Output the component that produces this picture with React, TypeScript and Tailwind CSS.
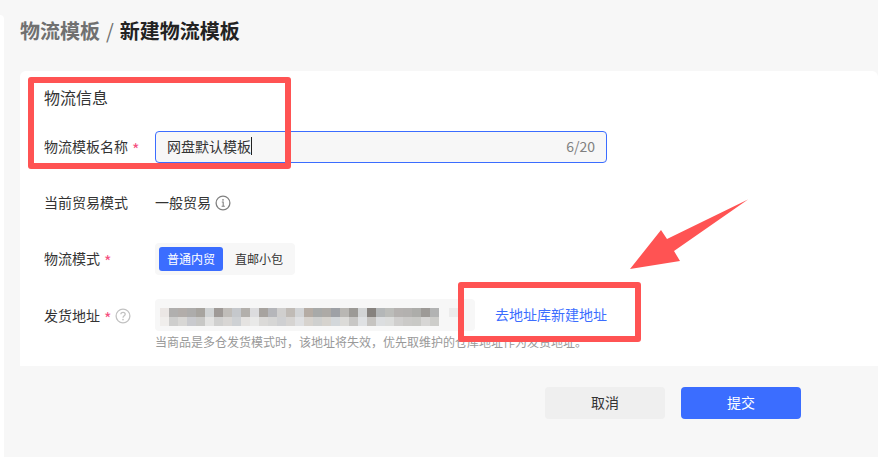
const top = ["#ebe7e5","#b0afae","#b2adaa","#adacab","#a7a49f","#d0d3d4","#9f9a97","#c0bdb9","#c5c8cc","#b3b0ac","#dcdcde","#a7a39f","#b5b6ba","#d0cfce","#c0bbb6","#d2d4d6","#b5aca4","#a8aaa9","#adaaa6","#9ea1a6","#b9b7b3","#9c9a96","#d2d4d5","#86827e","#b4b7b8","#bcbdba","#b5b2b0","#b3b1af","#adadaa","#9d9a97","#b2b3b3"];
const bottom = ["#f0eeec","#cececd","#d8d7d5","#c9cace","#c8c8c6","#e3e3e2","#d0d0cf","#d8d6d4","#ced1d4","#e5e3e1","#e9e9e8","#dbdad8","#d6d6d5","#cfd0d2","#d6d4d2","#dfe0e2","#d7d3ce","#cfd0cf","#d6d3ce","#d3d7da","#dcdbd8","#c8c7c5","#dfe1e3","#c6c4c1","#dcdee0","#dcdddc","#d0cfce","#cbcac8","#c9c9c6","#d7d6d5","#cdcdca"];

function Star() {
  return <span className="ml-1 translate-y-[3px] text-[16px] leading-none text-[#f5507f]">*</span>;
}

function Label({ children }: { children: React.ReactNode }) {
  return <div className="flex w-[111px] shrink-0 items-center pb-[2px] text-[#333333]">{children}</div>;
}

function Mosaic() {
  return (
    <svg width="298" height="18" viewBox="0 0 298 18" shapeRendering="crispEdges" className="block">
      {top.map((c, i) => <rect key={"t" + i} x={i * 9} y="0" width="9" height="9" fill={c} />)}
      {bottom.map((c, i) => <rect key={"b" + i} x={i * 9} y="9" width="9" height="9" fill={c} />)}
      <rect x="289" y="0" width="9" height="9" fill="#ececec" />
    </svg>
  );
}

export default function App() {
  return (
    <div className="relative flex h-[457px] w-[878px] overflow-hidden bg-[#f7f7f7] text-[14px] font-['Noto_Sans_CJK_SC','Liberation_Sans',sans-serif]">
      <div className="mt-[15px] w-1 shrink-0 rounded-tr-md bg-white" />
      <main className="min-w-0 flex-1">
        <h1 className="ml-4 mt-[17px] flex h-7 items-center text-[20px] font-semibold leading-7">
          <span className="text-[#707070]">物流模板</span>
          <span className="mx-[6px] font-normal text-[#707070]">/</span>
          <span className="text-[#222222]">新建物流模板</span>
        </h1>
        <section className="ml-4 mt-[26px] h-[295px] rounded-t-md bg-white pl-6 pt-[15px]">
          <h2 className="h-[22px] text-[16px] font-normal leading-[22px] text-[#333333]">物流信息</h2>
          <div className="mt-[23px] flex flex-col gap-6">
            <div className="flex h-8 items-stretch">
              <Label>物流模板名称<Star /></Label>
              <div className="flex w-[452px] items-center justify-between rounded border border-[#3b6dff] bg-[#f7f7f7] px-[11px] pb-[2px]">
                <span className="flex items-center text-[#333333]">网盘默认模板<span className="h-[18px] w-px bg-[#222222]" /></span>
                <span className="text-[#808080]">6/20</span>
              </div>
            </div>
            <div className="flex h-8 items-stretch">
              <Label>当前贸易模式</Label>
              <div className="flex items-center pb-[2px] text-[#333333]">
                一般贸易
                <svg width="16" height="16" viewBox="0 0 16 16" fill="none" stroke="#808080" className="ml-1 mt-[2px]">
                  <circle cx="8" cy="8" r="6.9" strokeWidth="1.3" />
                  <path d="M6.8 7H8.2V11.3M6.6 11.3H9.8" strokeWidth="1.1" />
                  <circle cx="8" cy="4.9" r="0.8" fill="#808080" stroke="none" />
                </svg>
              </div>
            </div>
            <div className="flex h-8 items-stretch">
              <Label>物流模式<Star /></Label>
              <div className="flex items-center rounded bg-[#f7f7f7] pl-1 text-[12px]">
                <div className="flex h-6 w-16 items-center justify-center rounded-[3px] bg-[#3b6dff] text-white">普通内贸</div>
                <div className="flex h-6 w-[72px] items-center justify-center text-[#333333]">直邮小包</div>
              </div>
            </div>
            <div className="flex items-start">
              <Label><span className="flex h-8 items-center">发货地址<Star /><svg width="16" height="16" viewBox="0 0 16 16" fill="none" stroke="#c2c2c2" className="ml-1 mt-[2px]"><circle cx="8" cy="8" r="6.9" strokeWidth="1.3" /><path d="M5.9 6.2C5.9 3.6 10.2 3.7 10.2 6.2C10.2 7.8 8 7.8 8 9.7" strokeWidth="1.3" /><circle cx="8" cy="11.6" r="0.85" fill="#c2c2c2" stroke="none" /></svg></span></Label>
              <div>
                <div className="flex items-center">
                  <div className="h-8 w-80 rounded bg-[#f7f7f7] py-[9px] pl-[5px]"><Mosaic /></div>
                  <a className="ml-5 pb-[2px] text-[#3b6dff]">去地址库新建地址</a>
                </div>
                <p className="mt-px text-[12px] leading-5 text-[#999999]">当商品是多仓发货模式时，该地址将失效，优先取维护的仓库地址作为发货地址。</p>
              </div>
            </div>
          </div>
        </section>
        <div className="mt-[21px] flex justify-end gap-4 pr-[77px]">
          <button className="h-8 w-[120px] rounded bg-[#efefef] pb-[2px] text-[#333333]">取消</button>
          <button className="h-8 w-[120px] rounded bg-[#3b6dff] pb-[2px] text-white">提交</button>
        </div>
      </main>
      <div className="pointer-events-none absolute left-[28px] top-[77px] h-[92px] w-[263px] rounded-[3px] border-[6px] border-[#ff5353]" />
      <div className="pointer-events-none absolute left-[458px] top-[282px] h-[60px] w-[183px] rounded-[3px] border-[6px] border-[#ff5353]" />
      <svg className="pointer-events-none absolute left-[620px] top-[190px]" width="140" height="90" viewBox="0 0 140 90">
        <path d="M128 9.5L47 49L41 40L10 79L60 71L54 61Z" fill="#ff5353" />
      </svg>
    </div>
  );
}
